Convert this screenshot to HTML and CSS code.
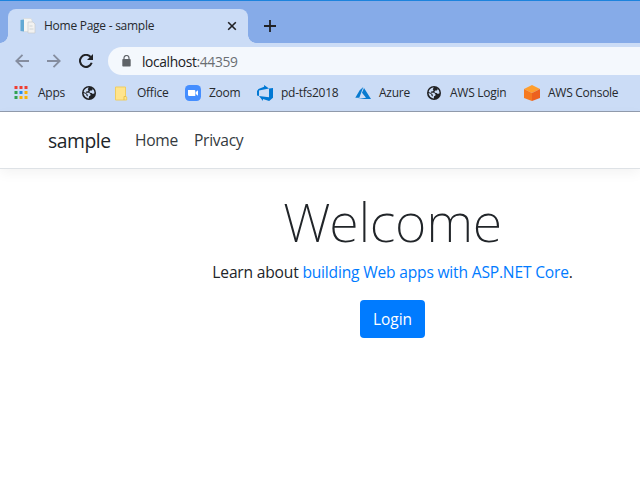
FILE: index.html
```html
<!DOCTYPE html>
<html lang="en">
<head>
<meta charset="utf-8">
<title>Home Page - sample</title>
<link rel="stylesheet" href="styles.css">
</head>
<body>
<svg width="0" height="0" class="defs"><defs>
<symbol id="globe" viewBox="0 0 14 14"><circle cx="7" cy="7" r="7" fill="#202124"/><path d="M6.8 1.5 5.7 3.2l.8 1-.5 1.1-1.8.3-.5 1.1 3.5.1 1.4 1.8-.3 1.2-1.3.5-.2 2.1C4 12.2 1.8 9.7 1.6 7l2.5 1.1.5 1.6 1.1.7.1-1.7L4.3 7.3 1.7 6.1C2 3.7 4.1 1.5 6.8 1.5ZM9.8 2.3c1.7 1 2.8 2.8 2.7 4.9L10.9 8 9.6 7l-1.7-.3-.5-1.2 1-.9 1.5-.2.8-1Z" fill="#cbdcf6"/></symbol>
</defs></svg>
<div class="browser">
  <div class="tabs">
    <div class="tab">
      <svg class="favicon" width="16" height="16" viewBox="0 0 16 16"><path d="M3.500 .5H11l1 1.500v11.500H3.500Z" fill="#f5f5f3" stroke="#d5d8d9" stroke-width=".6"/><path d="M.5 2 4 1.500v12l-3.500-.5Z" fill="#63a9d4"/><path d="M8 4h5l2 2v9H8Z" fill="#f2f2f1" stroke="#c8cccd" stroke-width=".7"/><path d="M9.500 8h3M9.500 11h4" stroke="#c8ced2" stroke-width=".8"/></svg>
      <span class="tab-title">Home Page - sample</span>
      <svg width="10" height="10" viewBox="0 0 10 10"><path d="m1.200 1.200 7.600 7.600m0-7.600L1.200 8.800" stroke="#202124" stroke-width="1.600"/></svg>
    </div>
    <svg class="plus" width="12" height="12" viewBox="0 0 12 12"><path d="M6 0v12M0 6h12" stroke="#202124" stroke-width="1.800"/></svg>
  </div>
  <div class="toolbar">
    <svg width="14" height="14" viewBox="0 0 14 14"><path d="M14 7H1.400M7.500.8 1.300 7l6.200 6.200" fill="none" stroke="#858d9f" stroke-width="1.800"/></svg>
    <svg width="14" height="14" viewBox="0 0 14 14"><path d="M0 7h12.600M6.500.8 12.700 7l-6.200 6.200" fill="none" stroke="#858d9f" stroke-width="1.800"/></svg>
    <svg width="14" height="14" viewBox="0 0 14 14"><path d="M12.700 8.800A6 6 0 1 1 11.600 3" fill="none" stroke="#202124" stroke-width="2"/><path d="M14 0v6H8Z" fill="#202124"/></svg>
    <div class="address">
      <svg width="9" height="12" viewBox="0 0 9 12"><path d="M2 5V3a2.400 2.400 0 0 1 5 0v2" fill="none" stroke="#5f6368" stroke-width="1.200"/><rect x=".3" y="4" width="8.400" height="7.600" rx=".8" fill="#5f6368"/></svg>
      <span class="url">localhost<span class="port">:44359</span></span>
    </div>
  </div>
  <div class="bookmarks">
    <div class="bookmark"><svg width="14" height="14" viewBox="0 0 14 14"><path d="M.5 0h3v3h-3zM5.500 0h3v3h-3zM10.500 0h3v3h-3z" fill="#ee3d32"/><path d="M.5 5h3v3h-3zM.5 10h3v3h-3z" fill="#31a153"/><path d="M5.500 5h3v3h-3z" fill="#258bed"/><path d="M10.500 5h3v3h-3zM5.500 10h3v3h-3zM10.500 10h3v3h-3z" fill="#f9b208"/></svg><span class="apps">Apps</span></div>
    <div class="bookmark"><svg width="14" height="14"><use href="#globe"/></svg></div>
    <div class="bookmark"><svg width="14" height="15" viewBox="0 0 14 15"><path d="M1.500 1h10v9l1.200 1v3H1.500Z" fill="#ffe48c" stroke="#f0cd60"/><path d="M10 14V10.500h2" fill="none" stroke="#e9c34a"/></svg><span class="office">Office</span></div>
    <div class="bookmark"><svg width="16" height="16" viewBox="0 0 16 16"><rect width="16" height="16" rx="4.500" fill="#458eff"/><path d="M3 5h6.300a1 1 0 0 1 1 1v5H4.200A1.200 1.200 0 0 1 3 9.800ZM10.800 7 13 5.200v5.600L10.800 9Z" fill="#fff"/></svg><span class="zoom">Zoom</span></div>
    <div class="bookmark"><svg width="16" height="16" viewBox="0 0 24 24"><path d="M0 8.877 2.247 5.910l8.405-3.416V.022l7.370 5.393L2.966 8.338v8.225L0 15.707zm24-4.450v14.651l-5.753 4.900-9.303-3.057v3.056l-5.978-7.416 15.057 1.798V5.415z" fill="#0078d4"/></svg><span class="devops">pd-tfs2018</span></div>
    <div class="bookmark"><svg width="16" height="16" viewBox="0 0 16 16"><path d="M8.300 2 4.700 5.300.3 12.700h4ZM9 3l7 11H3l8-1.300-4-5Z" fill="#087bd0"/></svg><span class="azure">Azure</span></div>
    <div class="bookmark"><svg width="14" height="14"><use href="#globe"/></svg><span class="aws">AWS Login</span></div>
    <div class="bookmark"><svg width="16" height="16" viewBox="0 0 16 16"><path d="m8 0 8 4-8 4-8-4Z" fill="#ff9e2d"/><path d="m0 4 8 4v8l-8-3Z" fill="#f57921"/><path d="m16 4-8 4v8l8-3Z" fill="#ed611f"/></svg><span class="console">AWS Console</span></div>
  </div>
</div>
<nav class="site-nav"><a class="brand">sample</a><a class="home">Home</a><a class="privacy">Privacy</a></nav>
<main>
  <h1>Welcome</h1>
  <p>Learn about <a>building Web apps with ASP.NET Core</a>.</p>
  <button>Login</button>
</main>
</body>
</html>
```
FILE: styles.css
```css
* { box-sizing: border-box; }
body { margin: 0; width: 640px; height: 480px; overflow: hidden; background: #fff; color: #212529; font-family: "Open Sans", "Noto Sans", sans-serif; }
svg { display: block; flex: none; }
.defs { position: absolute; }
.browser { height: 112px; background: #cbdcf6; border-bottom: 1px solid #929cae; }
.tabs { display: flex; height: 43px; padding-top: 8px; background: linear-gradient(#86abe8 42px, #cbdcf6 42px); border-top: 1px solid #1c83dd; }
.tab { position: relative; display: flex; align-items: center; width: 240px; height: 34px; margin-left: 8px; padding: 0 11px 0 12px; border-radius: 8px 8px 0 0; background: #cbdcf6; }
.tab::before, .tab::after { content: ""; position: absolute; bottom: 0; width: 8px; height: 8px; }
.tab::before { left: -8px; background: radial-gradient(circle at 0 0, #86abe8 7.5px, #cbdcf6 8px); }
.tab::after { right: -8px; background: radial-gradient(circle at 100% 0, #86abe8 7.5px, #cbdcf6 8px); }
.favicon { margin-right: 8px; }
.tab-title { flex: 1; margin-top: -2px; font-size: 12px; letter-spacing: -.26px; white-space: nowrap; color: #26292d; }
.plus { margin: 11px 0 0 16px; }
.toolbar { display: flex; align-items: center; height: 36px; padding-left: 15px; gap: 18px; }
.address { display: flex; align-items: center; flex: 1; height: 28px; margin-left: -3px; padding-left: 14px; border-radius: 14px 0 0 14px; background: #f4f8fd; }
.url { margin-left: 11px; font-size: 13.8px; letter-spacing: -.36px; color: #202124; }
.port { color: #6a6e73; }
.bookmarks { display: grid; grid-template-columns: 68px 32px 71px 72px 98px 72px 97px 1fr; height: 30px; padding: 0 0 2px 14px; }
.bookmark { display: flex; align-items: center; gap: 8px; font-size: 12px; letter-spacing: -.26px; white-space: nowrap; color: #26292d; }
.bookmark span { margin-top: -2px; }
.bookmark .apps { margin-left: 2px; }
.bookmark .office, .bookmark .aws { margin-left: 1px; }
.site-nav { display: flex; align-items: center; height: 57px; padding-left: 48px; border-bottom: 1px solid #dee2e6; box-shadow: 0 4px 12px rgba(0,0,0,.05); color: #343a40; font-size: 15.6px; letter-spacing: -.3px; }
.brand { width: 87px; font-size: 19.3px; letter-spacing: -.42px; color: #212529; }
.home { width: 59px; }
main { display: flex; flex-direction: column; align-items: center; padding: 19px 0 0 145px; }
h1 { margin: 0; font: 200 54px/67px "Noto Sans", "Open Sans", sans-serif; letter-spacing: -.3px; }
p { margin: 5px 0 16px; font-size: 15.6px; letter-spacing: -.19px; line-height: 24px; white-space: nowrap; }
p a { color: #007bff; }
button { width: 65px; height: 38px; border: 0; border-radius: 4px; padding: 0; background: #007bff; color: #fff; font: 15.5px "Open Sans", sans-serif; }
```
